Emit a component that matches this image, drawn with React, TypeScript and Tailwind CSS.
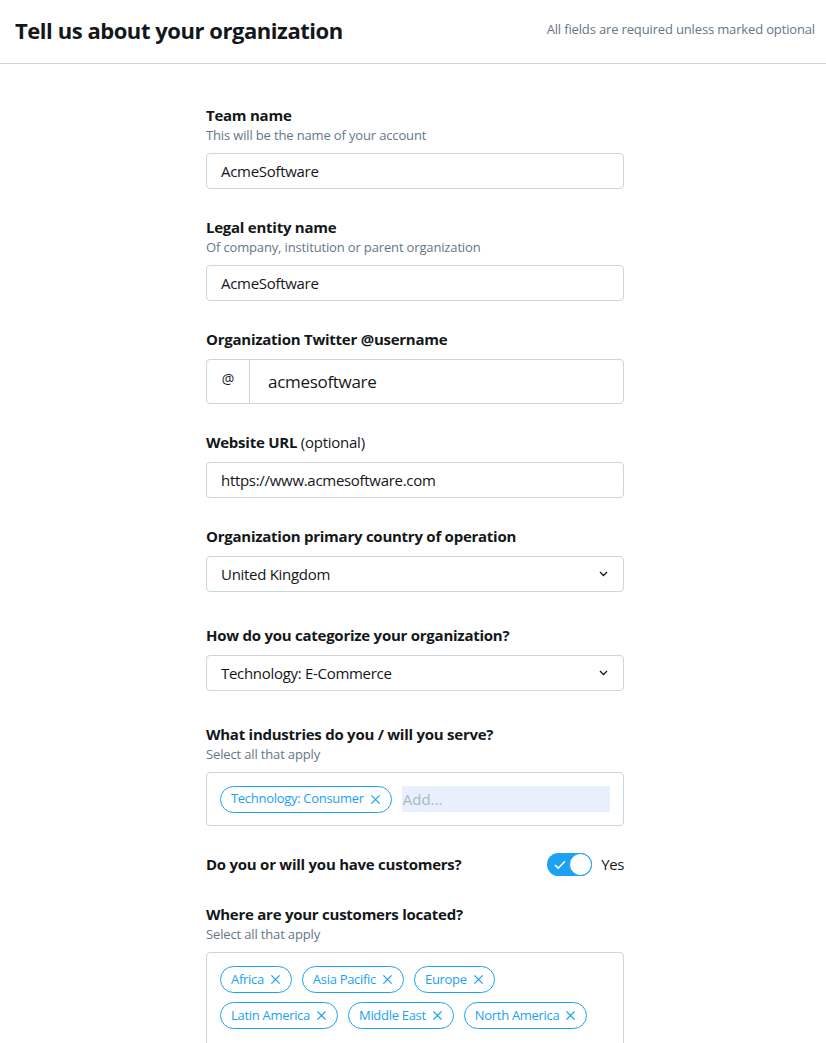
import React from 'react';

const FONT = { fontFamily: '"Open Sans", "Noto Sans", sans-serif' };

function Chip({ label }: { label: string }) {
  return (
    <span className="flex h-[27px] items-center gap-[6px] rounded-full border border-[#1da1f2] px-[10px] text-[13px] text-[#1da1f2] tracking-[-0.3px]">
      {label}
      <svg width="11" height="11" viewBox="0 0 12 12" fill="none" stroke="currentColor" strokeWidth="1.4">
        <path d="M1.5 1.5l9 9M10.5 1.5l-9 9" />
      </svg>
    </span>
  );
}

function Label({ children, help }: { children: React.ReactNode; help?: string }) {
  return (
    <div className={help ? 'mb-[7px]' : 'mb-[10px]'}>
      <div className="text-[15px] font-bold leading-[20px] text-[#14171a] tracking-[-0.25px]">{children}</div>
      {help && <div className="text-[13px] leading-[21px] text-[#657786] tracking-[-0.15px]">{help}</div>}
    </div>
  );
}

function TextInput({ value }: { value: string }) {
  return (
    <div className="flex h-[36px] items-center rounded-[4px] border border-[#ccd6dd] px-[14px] text-[15px] text-[#14171a] tracking-[-0.3px]">
      {value}
    </div>
  );
}

function Select({ value }: { value: string }) {
  return (
    <div className="flex h-[36px] items-center justify-between rounded-[4px] border border-[#ccd6dd] pl-[14px] pr-[15px] text-[15px] text-[#14171a] tracking-[-0.3px]">
      {value}
      <svg width="9" height="6" viewBox="0 0 9 6" fill="none" stroke="#14171a" strokeWidth="1.3">
        <path d="M1 1l3.5 3.5L8 1" />
      </svg>
    </div>
  );
}

export default function App() {
  return (
    <div className="min-h-screen bg-white" style={FONT}>
      <header className="flex h-[64px] items-center justify-between border-b border-[#ccd6dd] pb-[3px] pl-[15px] pr-[11px]">
        <h1 className="text-[22px] font-bold text-[#14171a] tracking-[-0.45px]">Tell us about your organization</h1>
        <span className="text-[13px] text-[#657786] tracking-[-0.15px]">All fields are required unless marked optional</span>
      </header>

      <main className="mx-auto w-[418px] translate-x-[2px] pt-[41px]">
        <section className="mb-[28px]">
          <Label help="This will be the name of your account">Team name</Label>
          <TextInput value="AcmeSoftware" />
        </section>

        <section className="mb-[28px]">
          <Label help="Of company, institution or parent organization">Legal entity name</Label>
          <TextInput value="AcmeSoftware" />
        </section>

        <section className="mb-[28px]">
          <Label>Organization Twitter @username</Label>
          <div className="flex h-[45px] rounded-[4px] border border-[#ccd6dd]">
            <div className="flex w-[43px] justify-center border-r border-[#ccd6dd] pt-[8px] text-[14px] text-[#14171a]">@</div>
            <div className="flex items-center pl-[18px] text-[17px] text-[#14171a] tracking-[-0.3px]">acmesoftware</div>
          </div>
        </section>

        <section className="mb-[28px]">
          <Label>
            Website URL <span className="font-normal">(optional)</span>
          </Label>
          <TextInput value="https://www.acmesoftware.com" />
        </section>

        <section className="mb-[33px]">
          <Label>Organization primary country of operation</Label>
          <Select value="United Kingdom" />
        </section>

        <section className="mb-[33px]">
          <Label>How do you categorize your organization?</Label>
          <Select value="Technology: E-Commerce" />
        </section>

        <section>
          <Label help="Select all that apply">What industries do you / will you serve?</Label>
          <div className="flex h-[54px] items-center gap-[10px] rounded-[4px] border border-[#ccd6dd] pl-[13px] pr-[13px]">
            <Chip label="Technology: Consumer" />
            <div className="flex h-[26px] flex-1 items-center bg-[#e8f0fe] px-[1px] text-[15px] text-[#aab8c2]">Add...</div>
          </div>
        </section>

        <section className="mb-[28px] mt-[27px] flex h-[23px] items-center justify-between">
          <div className="text-[15px] font-bold text-[#14171a] tracking-[-0.25px]">Do you or will you have customers?</div>
          <div className="flex items-center gap-[9px]">
            <div className="flex h-[23px] w-[45px] items-center justify-between rounded-full bg-[#1da1f2] pl-[7px]">
              <svg width="12" height="10" viewBox="0 0 12 10" fill="none" stroke="white" strokeWidth="1.6">
                <path d="M1 5.2l3.2 3L11 1.3" />
              </svg>
              <div className="h-[23px] w-[23px] rounded-full border-[1.5px] border-[#1da1f2] bg-white" />
            </div>
            <span className="text-[15px] text-[#14171a] tracking-[-0.4px]">Yes</span>
          </div>
        </section>

        <section>
          <Label help="Select all that apply">Where are your customers located?</Label>
          <div className="flex h-[100px] flex-wrap content-start gap-x-[10px] gap-y-[9px] rounded-t-[4px] border border-[#ccd6dd] px-[13px] pt-[13px]">
            <Chip label="Africa" />
            <Chip label="Asia Pacific" />
            <Chip label="Europe" />
            <Chip label="Latin America" />
            <Chip label="Middle East" />
            <Chip label="North America" />
          </div>
        </section>
      </main>
    </div>
  );
}
